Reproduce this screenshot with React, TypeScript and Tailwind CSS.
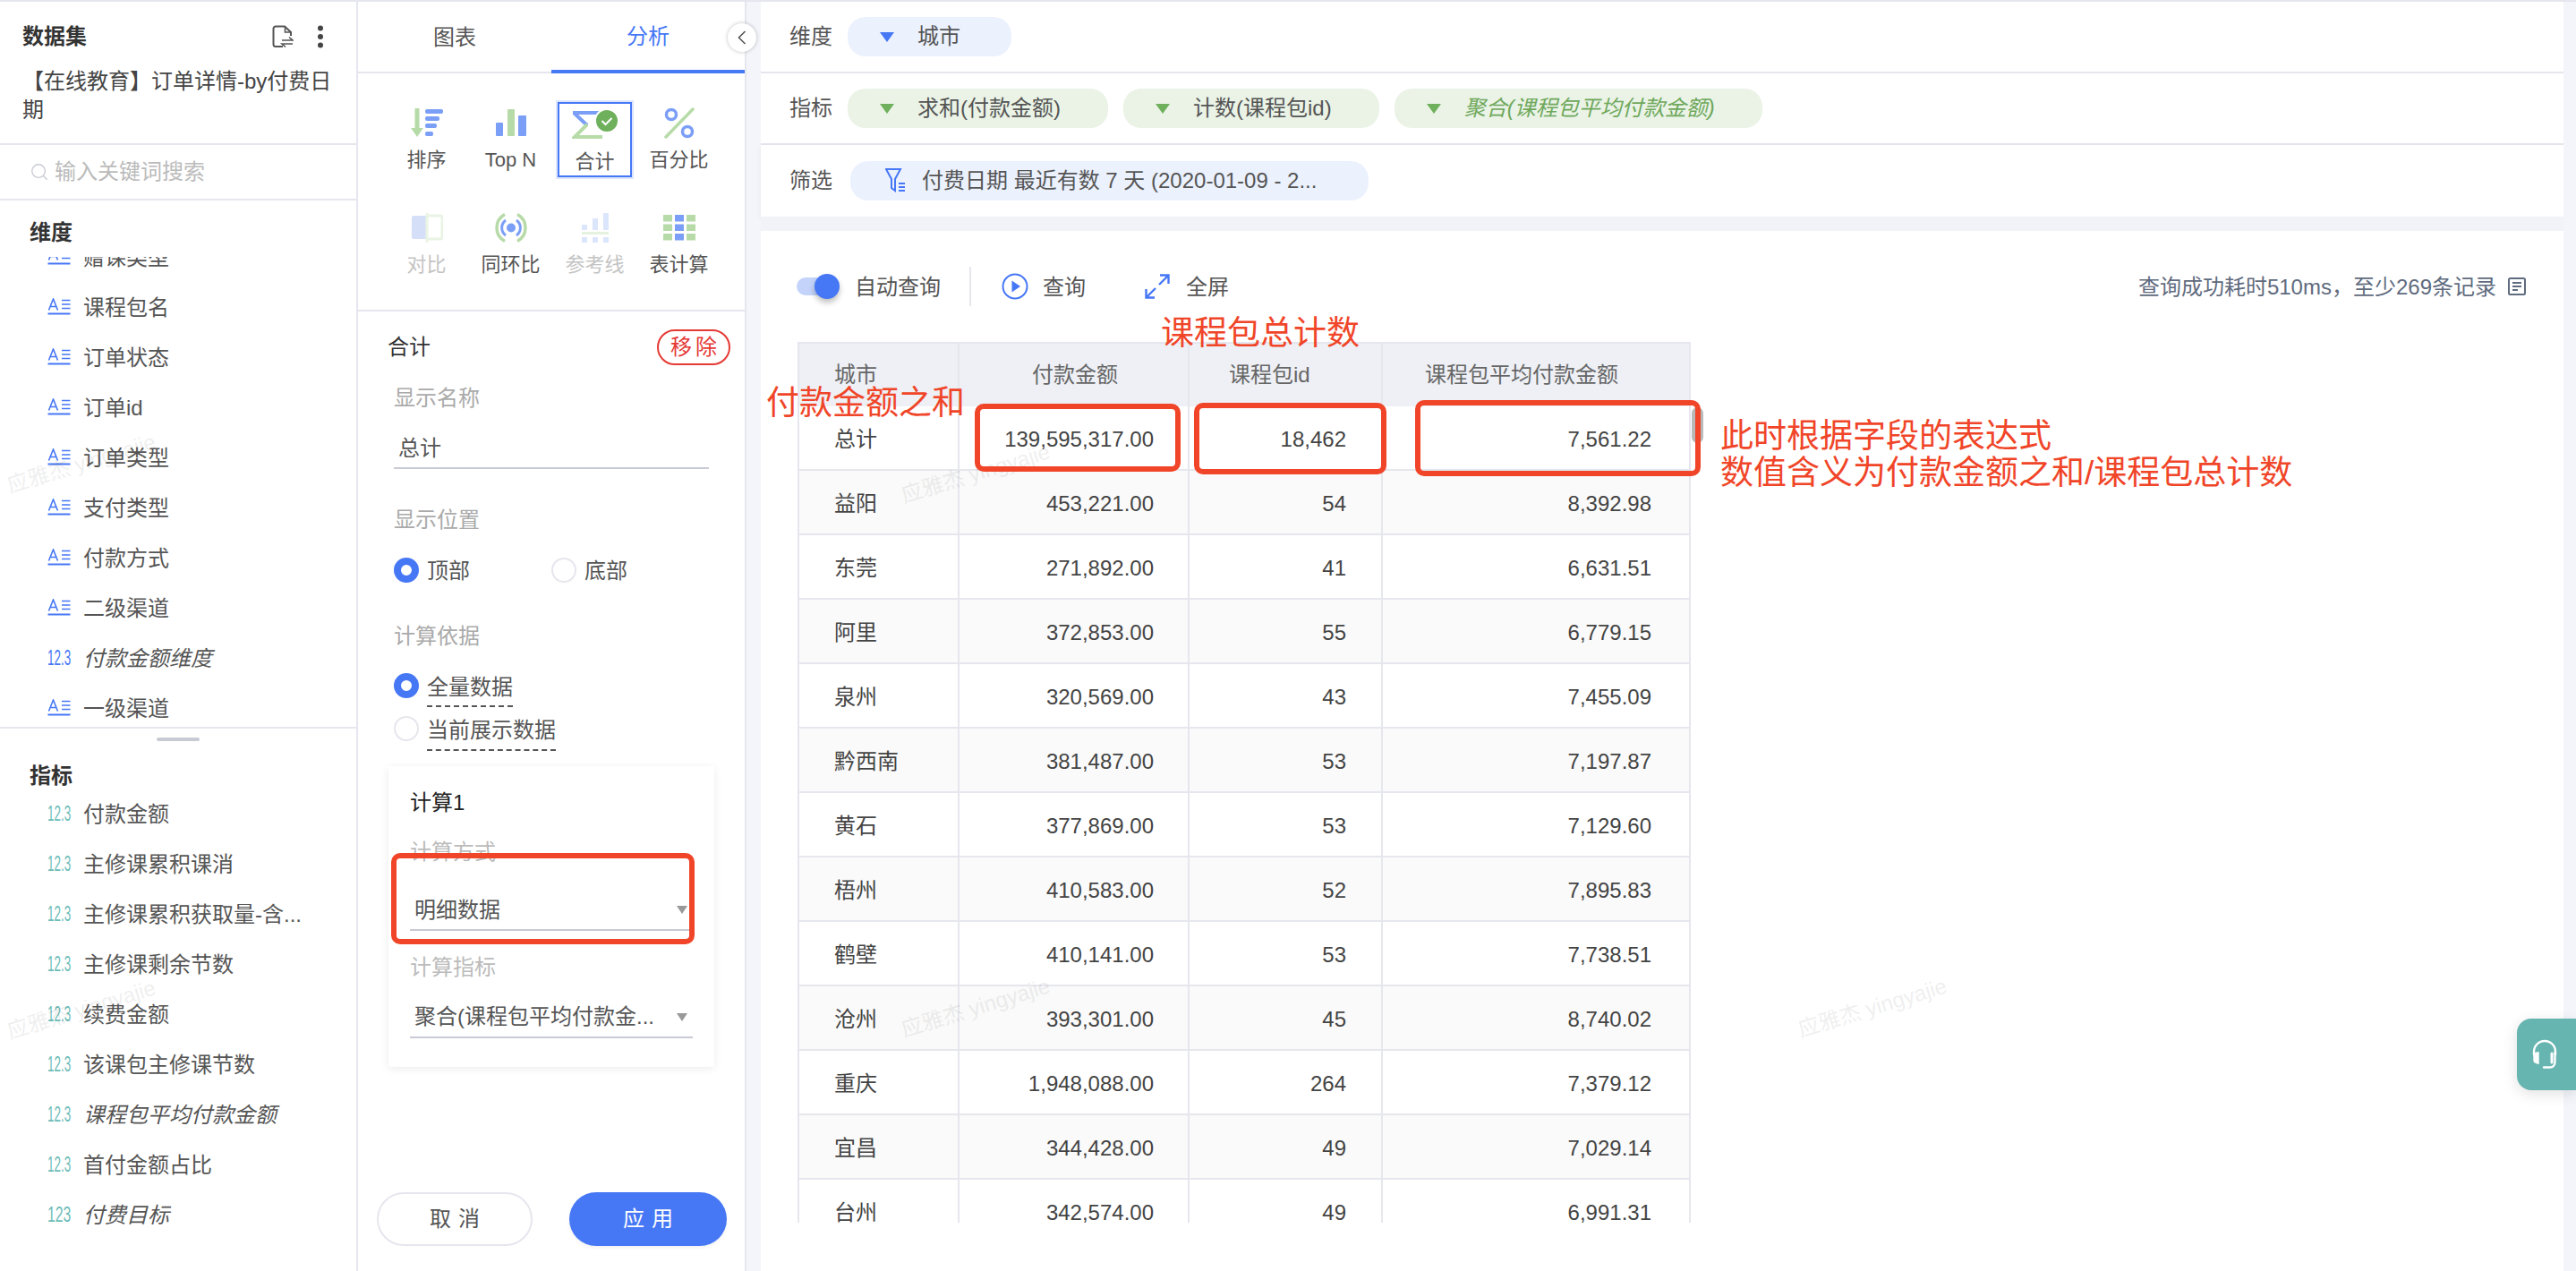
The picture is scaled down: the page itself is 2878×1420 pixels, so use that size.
import React from "react";
import { Search } from "lucide-react";

const dimensions = [
  { name: "赠课类型" },
  { name: "课程包名" },
  { name: "订单状态" },
  { name: "订单id" },
  { name: "订单类型" },
  { name: "支付类型" },
  { name: "付款方式" },
  { name: "二级渠道" },
  { name: "付款金额维度", num: true },
  { name: "一级渠道" },
];

const metrics = [
  { name: "付款金额" },
  { name: "主修课累积课消" },
  { name: "主修课累积获取量-含..." },
  { name: "主修课剩余节数" },
  { name: "续费金额" },
  { name: "该课包主修课节数" },
  { name: "课程包平均付款金额", calc: true },
  { name: "首付金额占比" },
  { name: "付费目标", calc: true, noDot: true },
];

const rows = [
  ["益阳", "453,221.00", "54", "8,392.98"],
  ["东莞", "271,892.00", "41", "6,631.51"],
  ["阿里", "372,853.00", "55", "6,779.15"],
  ["泉州", "320,569.00", "43", "7,455.09"],
  ["黔西南", "381,487.00", "53", "7,197.87"],
  ["黄石", "377,869.00", "53", "7,129.60"],
  ["梧州", "410,583.00", "52", "7,895.83"],
  ["鹤壁", "410,141.00", "53", "7,738.51"],
  ["沧州", "393,301.00", "45", "8,740.02"],
  ["重庆", "1,948,088.00", "264", "7,379.12"],
  ["宜昌", "344,428.00", "49", "7,029.14"],
  ["台州", "342,574.00", "49", "6,991.31"],
];

const BLUE = "#4677f5";
const BAR = "#7b9ff6";
const GREEN = "#b7dba8";

const TextIcon = () => (
  <svg width="26" height="20" viewBox="0 0 26 20" className="shrink-0" fill="none" stroke={BLUE}>
    <path d="M1.5 13.5 6.5 1 11.5 13.5M3.2 9.5H9.8" strokeWidth="1.6" />
    <path d="M16 2.5H25.5M16 7H25.5M16 11.5H25.5" strokeWidth="1.5" />
    <path d="M0.5 17.5H25.5" strokeWidth="2" />
  </svg>
);

const NumIcon = ({ color, noDot }: { color: string; noDot?: boolean }) => (
  <span className={`inline-block w-[26px] shrink-0 origin-left text-[24px] leading-[28px] ${noDot ? "scale-x-[0.66]" : "scale-x-[0.56]"}`} style={{ color }}>
    {noDot ? "123" : "12.3"}
  </span>
);

const Tri = ({ color, w = 16, h = 11 }: { color: string; w?: number; h?: number }) => (
  <svg width={w} height={h} viewBox="0 0 16 11" preserveAspectRatio="none" className="shrink-0">
    <path d="M0 0H16L8 11Z" fill={color} />
  </svg>
);

const SortIcon = () => (
  <svg width="36" height="33" viewBox="0 0 36 33">
    <path d="M4.5 0H9.5V22H14L7 32 0 22H4.5Z" fill={GREEN} />
    <rect x="16" y="1" width="20" height="5" rx="2" fill={BAR} />
    <rect x="16" y="9" width="16" height="5" rx="2" fill={BAR} />
    <rect x="16" y="17" width="13" height="5" rx="2" fill={BAR} />
    <rect x="16" y="26" width="9" height="5" rx="2" fill={BAR} />
  </svg>
);

const TopNIcon = () => (
  <svg width="34" height="33" viewBox="0 0 34 33">
    <rect x="0" y="16" width="8" height="15" rx="1" fill={BAR} />
    <rect x="13" y="1" width="8" height="30" rx="1" fill={GREEN} />
    <rect x="25" y="8" width="9" height="23" rx="1" fill={BAR} />
  </svg>
);

const SumIcon = () => (
  <svg width="52" height="33" viewBox="0 0 52 33" fill="none">
    <path d="M1 3H30M2 3 17 17" stroke={BAR} strokeWidth="4" />
    <path d="M17 16 3 30H34" stroke={GREEN} strokeWidth="4" />
    <circle cx="39" cy="12" r="13" fill="#6fb05c" stroke="#fff" strokeWidth="2" />
    <path d="M33.5 12 37.5 16 44.5 9" stroke="#fff" strokeWidth="2" />
  </svg>
);

const PercentIcon = () => (
  <svg width="34" height="35" viewBox="0 0 34 35" fill="none">
    <path d="M32 2 2 33" stroke={GREEN} strokeWidth="3.5" strokeLinecap="round" />
    <circle cx="8" cy="8" r="5.5" stroke={BAR} strokeWidth="3.5" />
    <circle cx="26" cy="27" r="5.5" stroke={BAR} strokeWidth="3.5" />
  </svg>
);

const CompareIcon = () => (
  <svg width="36" height="33" viewBox="0 0 36 33" fill="none">
    <path d="M3 3H17V29H3A2 2 0 0 1 1 27V5A2 2 0 0 1 3 3Z" fill="#d5dff7" />
    <path d="M18 0V33M18 3H33A2 2 0 0 1 35 5V27A2 2 0 0 1 33 29H18" stroke="#e9f4e4" strokeWidth="3" />
  </svg>
);

const RingIcon = () => (
  <svg width="36" height="35" viewBox="0 0 36 35" fill="none">
    <path d="M11 2.5A17 17 0 0 0 11 32.5M25 2.5A17 17 0 0 1 25 32.5" stroke={GREEN} strokeWidth="3.5" />
    <path d="M12 9A10.5 10.5 0 0 0 12 26M24 9A10.5 10.5 0 0 1 24 26" stroke={BAR} strokeWidth="3" />
    <circle cx="18" cy="17.5" r="5" fill={BAR} />
  </svg>
);

const RefLineIcon = () => (
  <svg width="30" height="33" viewBox="0 0 30 33">
    <rect x="0" y="13" width="6" height="6" fill="#dbe5fb" />
    <rect x="12" y="6" width="6" height="13" fill="#dbe5fb" />
    <rect x="24" y="0" width="6" height="19" fill="#dbe5fb" />
    <rect x="0" y="21" width="30" height="3" fill="#e6f2e0" />
    <rect x="0" y="27" width="6" height="6" fill="#dbe5fb" />
    <rect x="12" y="27" width="6" height="6" fill="#dbe5fb" />
    <rect x="24" y="27" width="6" height="6" fill="#dbe5fb" />
  </svg>
);

const TableCalcIcon = () => (
  <svg width="36" height="29" viewBox="0 0 36 29">
    {[0, 10.5, 21].map((y) => (
      <g key={y}>
        <rect x="0" y={y} width="10" height="7.5" fill={GREEN} />
        <rect x="13" y={y} width="10" height="7.5" fill={BAR} />
        <rect x="26" y={y} width="10" height="7.5" fill={GREEN} />
      </g>
    ))}
  </svg>
);

const tools = [
  { label: "排序", icon: <SortIcon /> },
  { label: "Top N", icon: <TopNIcon /> },
  { label: "合计", icon: <SumIcon />, active: true },
  { label: "百分比", icon: <PercentIcon /> },
  { label: "对比", icon: <CompareIcon />, disabled: true },
  { label: "同环比", icon: <RingIcon /> },
  { label: "参考线", icon: <RefLineIcon />, disabled: true },
  { label: "表计算", icon: <TableCalcIcon /> },
];

const Radio = ({ checked }: { checked?: boolean }) =>
  checked ? (
    <span className="block h-[28px] w-[28px] shrink-0 rounded-full border-[8px] border-[#4677f5] bg-white" />
  ) : (
    <span className="block h-[28px] w-[28px] shrink-0 rounded-full border-2 border-[#e6e6ee] bg-white" />
  );

const Pill = ({ label, color, bg, triangle, italic, pr = "pr-[53px]" }: { label: string; color?: string; bg: string; triangle: string; italic?: boolean; pr?: string }) => (
  <div className={`flex h-[44px] items-center rounded-[20px] pl-[36px] ${pr} ${bg}`}>
    <Tri color={triangle} />
    <span className={`ml-[26px] whitespace-nowrap ${italic ? "italic" : ""}`} style={{ color }}>
      {label}
    </span>
  </div>
);

const annotationBoxes = [
  "left-[437px] top-[953px] h-[102px] w-[339px]",
  "left-[1089px] top-[451px] h-[76px] w-[230px]",
  "left-[1334px] top-[450px] h-[80px] w-[215px]",
  "left-[1581px] top-[447px] h-[85px] w-[319px]",
];

const watermarks = [
  "left-[5px] top-[502px]",
  "left-[5px] top-[1112px]",
  "left-[1004px] top-[513px]",
  "left-[1004px] top-[1110px]",
  "left-[2006px] top-[1110px]",
];

export default function App() {
  return (
    <div className="relative h-[1420px] w-[2878px] overflow-hidden bg-white font-['Liberation_Sans','Noto_Sans_CJK_SC',sans-serif] text-[24px] leading-[32px] text-[#555]">
      <div className="h-[2px] bg-[#e6e6ee]" />
      <div className="flex h-[1418px]">
        {/* 数据集 */}
        <aside className="w-[400px] shrink-0 border-r-2 border-[#e6e6ee]">
          <div className="h-[160px] border-b-2 border-[#e6e6ee] pl-[25px] pr-[24px] pt-[23px]">
            <div className="flex items-center justify-between pr-[12px]">
              <span className="font-bold text-[#333]">数据集</span>
              <div className="flex items-center gap-[26px]">
                <svg width="24" height="26" viewBox="0 0 24 26" fill="none" stroke="#555" strokeWidth="2">
                  <path d="M12 24H4A2.5 2.5 0 0 1 1.5 21.5V4A2.5 2.5 0 0 1 4 1.5H14L21 8V12" />
                  <path d="M14.5 1.5V8H21" strokeWidth="1.6" />
                  <path d="M11 17H23L19 13.5M23 21H11L15 24.5" strokeWidth="1.6" />
                </svg>
                <svg width="8" height="26" viewBox="0 0 8 26" fill="#444">
                  <circle cx="4" cy="3.5" r="3" />
                  <circle cx="4" cy="13" r="3" />
                  <circle cx="4" cy="22.5" r="3" />
                </svg>
              </div>
            </div>
            <div className="mt-[18px] text-[#444]">【在线教育】订单详情-by付费日期</div>
          </div>
          <div className="flex h-[62px] items-center gap-[6px] border-b-2 border-[#e6e6ee] pl-[33px] text-[#bbb]">
            <Search size={22} strokeWidth={1.5} className="text-[#c8cad4]" />
            <span>输入关键词搜索</span>
          </div>
          <div className="h-[63px] pl-[33px] pt-[20px] font-bold text-[#333]">维度</div>
          <div className="h-[527px] overflow-hidden border-b-2 border-[#e6e6ee]">
            <div className="-mt-[28px]">
              {dimensions.map((d) => (
                <div key={d.name} className="flex h-[56px] items-center gap-[14px] pl-[53px]">
                  {d.num ? <NumIcon color={BLUE} /> : <TextIcon />}
                  <span className={`pt-[2px] ${d.num ? "italic" : ""}`}>{d.name}</span>
                </div>
              ))}
            </div>
          </div>
          <div className="mx-auto mt-[10px] h-[4px] w-[48px] rounded-full bg-[#c8cad4]" />
          <div className="mt-[21px] h-[32px] pl-[33px] pt-[2px] font-bold text-[#333]">指标</div>
          {metrics.map((m) => (
            <div key={m.name} className="flex h-[56px] items-center gap-[14px] pl-[53px]">
              <NumIcon color="#6cbcb8" noDot={m.noDot} />
              <span className={`whitespace-nowrap pt-[2px] ${m.calc ? "italic" : ""}`}>{m.name}</span>
            </div>
          ))}
        </aside>

        {/* 分析配置 */}
        <section className="flex w-[434px] shrink-0 flex-col border-r-2 border-[#e6e6ee]">
          <div className="flex h-[80px] border-b-2 border-[#e6e6ee]">
            <div className="flex w-[216px] items-center justify-center pt-[2px]">图表</div>
            <div className="-mb-[2px] flex w-[216px] items-center justify-center border-b-4 border-[#4677f5] pt-[2px] text-[#4677f5]">分析</div>
          </div>
          <div className="h-[266px] border-b-2 border-[#e6e6ee] pl-[35px] pt-[32px]">
            <div className="grid grid-cols-[repeat(4,83px)] gap-x-[11px] gap-y-[33px]">
              {tools.map((t) => (
                <div
                  key={t.label}
                  className={`flex h-[84px] flex-col items-center pt-[6px] text-[22px] leading-[28px] whitespace-nowrap ${
                    t.active ? "outline-2 outline-[#dbe5fd] border-2 border-[#4677f5] pt-[4px]" : ""
                  } ${t.disabled ? "text-[#c4c4c4]" : ""}`}
                >
                  <div className="flex h-[35px] items-center">{t.icon}</div>
                  <div className="mt-[10px]">{t.label}</div>
                </div>
              ))}
            </div>
          </div>
          <div className="mt-[20px] flex h-[40px] items-center justify-between pl-[33px] pr-[16px]">
            <span className="text-[#333]">合计</span>
            <span className="flex h-[40px] w-[82px] items-center justify-center rounded-full border-2 border-[#e53935] pl-[4px] tracking-[4px] text-[#e53935]">移除</span>
          </div>
          <div className="pl-[40px]">
            <div className="mt-[19px] pt-[2px] text-[#aaa]">显示名称</div>
            <div className="flex h-[63px] w-[352px] items-end border-b-2 border-[#c8cad4] pb-[5px] pl-[5px]">总计</div>
            <div className="mt-[39px] pt-[2px] text-[#aaa]">显示位置</div>
            <div className="mt-[23px] flex items-center">
              <div className="flex w-[176px] items-center gap-[9px]">
                <Radio checked />
                <span className="pt-[2px]">顶部</span>
              </div>
              <div className="flex items-center gap-[9px]">
                <Radio />
                <span className="pt-[2px]">底部</span>
              </div>
            </div>
            <div className="mt-[39px] pt-[2px] text-[#aaa]">计算依据</div>
            <div className="mt-[23px] flex items-start gap-[9px]">
              <div className="mt-[2px]"><Radio checked /></div>
              <span className="border-b-2 border-dashed border-[#555] pb-[4px] pt-[2px]">全量数据</span>
            </div>
            <div className="mt-[8px] flex items-start gap-[9px]">
              <div className="mt-[2px]"><Radio /></div>
              <span className="border-b-2 border-dashed border-[#555] pb-[5px] pt-[2px]">当前展示数据</span>
            </div>
            <div className="-ml-[6px] mt-[17px] h-[336px] w-[364px] rounded-[2px] bg-white pl-[24px] pt-[25px] shadow-[0_2px_10px_rgba(0,0,0,0.08)]">
              <div className="text-[#222]">计算1</div>
              <div className="mt-[23px] text-[#bbb]">计算方式</div>
              <div className="flex h-[72px] w-[316px] items-end justify-between border-b-2 border-[#c8cad4] pb-[5px] pl-[5px] pr-[6px]">
                <span>明细数据</span>
                <span className="mb-[12px]"><Tri color="#999" w={12} h={9} /></span>
              </div>
              <div className="mt-[25px] text-[#bbb]">计算指标</div>
              <div className="flex h-[63px] w-[316px] items-end justify-between border-b-2 border-[#c8cad4] pb-[6px] pl-[5px] pr-[6px]">
                <span className="whitespace-nowrap">聚合(课程包平均付款金...</span>
                <span className="mb-[11px]"><Tri color="#999" w={12} h={9} /></span>
              </div>
            </div>
          </div>
          <div className="mt-auto flex pb-[28px] pl-[21px]">
            <button className="h-[60px] w-[174px] rounded-full border-2 border-[#e6e6ee] bg-white pl-[8px] tracking-[8px] text-[#555]">取消</button>
            <button className="ml-[41px] h-[60px] w-[176px] rounded-full bg-[#4677f5] pl-[8px] tracking-[8px] text-white shadow-[0_2px_4px_rgba(0,0,0,0.06)]">应用</button>
          </div>
        </section>

        <div className="w-[16px] shrink-0 bg-[#f4f5fa]" />

        {/* 主内容 */}
        <main className="flex w-[2014px] shrink-0 flex-col">
          <div className="flex h-[80px] items-center border-b-2 border-[#e6e6ee] pl-[32px]">
            <span className="w-[48px]">维度</span>
            <div className="ml-[17px]">
              <Pill label="城市" bg="bg-[#ebf1fd]" triangle={BLUE} pr="pr-[57px]" />
            </div>
          </div>
          <div className="flex h-[80px] items-center border-b-2 border-[#e6e6ee] pl-[32px]">
            <span className="w-[48px]">指标</span>
            <div className="ml-[17px] flex gap-[17px]">
              <Pill label="求和(付款金额)" bg="bg-[#eaf3e6]" triangle="#6fb05c" />
              <Pill label="计数(课程包id)" bg="bg-[#eaf3e6]" triangle="#6fb05c" />
              <Pill label="聚合(课程包平均付款金额)" bg="bg-[#eaf3e6]" triangle="#6fb05c" color="#6fa85c" italic />
            </div>
          </div>
          <div className="flex h-[80px] items-center pl-[32px] shadow-[0_2px_6px_rgba(0,0,0,0.06)]">
            <span className="w-[48px]">筛选</span>
            <div className="ml-[20px] flex h-[44px] w-[579px] items-center gap-[18px] rounded-[20px] bg-[#ebf1fd] pl-[39px]">
              <svg width="23" height="30" viewBox="0 0 23 30" fill="none" stroke={BLUE} strokeWidth="2" className="shrink-0">
                <path d="M1 2H17L11 13V26L7 23V13Z" />
                <path d="M15 18H22M15 22H22M15 26H22" />
              </svg>
              <span className="whitespace-nowrap">付费日期 最近有数 7 天 (2020-01-09 - 2...</span>
            </div>
          </div>
          <div className="h-[16px] shrink-0 bg-[#f2f3f8]" />

          <div className="flex items-center pl-[40px] pr-[42px] pt-[40px]">
            <div className="relative h-[44px] w-[48px]">
              <div className="absolute left-0 top-[12px] h-[20px] w-[40px] rounded-full bg-[#c3d3fa]" />
              <div className="absolute left-[20px] top-[8px] h-[28px] w-[28px] rounded-full bg-[#4677f5] shadow-[0_4px_6px_rgba(0,0,0,0.25)]" />
            </div>
            <span className="ml-[17px] pt-[2px]">自动查询</span>
            <div className="ml-[32px] h-[44px] w-[2px] bg-[#e6e6ee]" />
            <svg width="30" height="30" viewBox="0 0 30 30" fill="none" className="ml-[34px]">
              <circle cx="15" cy="15" r="13.5" stroke={BLUE} strokeWidth="2" />
              <path d="M11.5 8.5 21 15 11.5 21.5Z" fill={BLUE} />
            </svg>
            <span className="ml-[16px] pt-[2px]">查询</span>
            <svg width="28" height="28" viewBox="0 0 28 28" fill="none" stroke={BLUE} strokeWidth="2.4" className="ml-[66px]">
              <path d="M17 1.5H26.5V11M26.5 1.5 16 12" />
              <path d="M1.5 17V26.5H11M1.5 26.5 12 16" />
            </svg>
            <span className="ml-[18px] pt-[2px]">全屏</span>
            <span className="ml-auto pt-[2px] text-[#5f6b7e]">查询成功耗时510ms，至少269条记录</span>
            <svg width="20" height="20" viewBox="0 0 20 20" fill="none" stroke="#5f6b7e" strokeWidth="2" className="ml-[13px]">
              <rect x="1" y="1" width="18" height="18" rx="1.5" />
              <path d="M5 6H15M5 10H15M5 14H11" />
            </svg>
          </div>

          <div className="ml-[41px] mt-[40px] h-[984px] w-[998px] overflow-hidden border-l-2 border-[#e6e6ee]">
            <div className="grid h-[72px] grid-cols-[179px_257px_216px_344px] border-t-2 border-[#e6e6ee] bg-[#eef0f5] text-[#666]">
              <div className="flex items-center border-r-2 border-[#e6e6ee] pl-[39px]">城市</div>
              <div className="flex items-center border-r-2 border-[#e6e6ee] pl-[81px]">付款金额</div>
              <div className="flex items-center border-r-2 border-[#e6e6ee] pl-[44px]">课程包id</div>
              <div className="flex items-center border-r-2 border-[#e6e6ee] pl-[47px]">课程包平均付款金额</div>
            </div>
            {[["总计", "139,595,317.00", "18,462", "7,561.22"], ...rows].map((r, i) => (
              <div key={r[0]} className={`grid h-[72px] grid-cols-[179px_257px_216px_344px] border-b-2 border-[#e6e6ee] text-[#444] ${i % 2 === 1 ? "bg-[#fafafa]" : "bg-white"}`}>
                <div className="flex items-center border-r-2 border-[#e6e6ee] pl-[39px] pt-[3px]">{r[0]}</div>
                <div className="flex items-center justify-end border-r-2 border-[#e6e6ee] pr-[38px] pt-[3px]">{r[1]}</div>
                <div className="flex items-center justify-end border-r-2 border-[#e6e6ee] pr-[39px] pt-[3px]">{r[2]}</div>
                <div className="flex items-center justify-end border-r-2 border-[#e6e6ee] pr-[42px] pt-[3px]">{r[3]}</div>
              </div>
            ))}
          </div>
        </main>

        <div className="flex-1 bg-[#f4f5fa]" />
      </div>

      {/* 收起按钮 */}
      <div className="absolute left-[813px] top-[26px] flex h-[32px] w-[32px] items-center justify-center rounded-full bg-white shadow-[0_0_4px_rgba(0,0,0,0.25)]">
        <svg width="10" height="16" viewBox="0 0 10 16" fill="none" stroke="#555" strokeWidth="1.6">
          <path d="M8.5 1 1.5 8 8.5 15" />
        </svg>
      </div>

      {/* 表格滚动条 */}
      <div className="absolute left-[1890px] top-[455px] h-[40px] w-[13px] rounded-full bg-[#b9b9b9]" />

      {/* 水印 */}
      {watermarks.map((w) => (
        <div key={w} className={`pointer-events-none absolute ${w} -rotate-[17deg] whitespace-nowrap text-[#000] opacity-[0.06]`}>
          应雅杰 yingyajie
        </div>
      ))}

      {/* 截图上的红色标注 */}
      {annotationBoxes.map((b) => (
        <div key={b} className={`pointer-events-none absolute ${b} rounded-[10px] border-[6px] border-[#f04528]`} />
      ))}
      <div className="absolute left-[856px] top-[427px] whitespace-nowrap text-[37px] leading-[48px] text-[#f04528]">付款金额之和</div>
      <div className="absolute left-[1297px] top-[349px] whitespace-nowrap text-[37px] leading-[48px] text-[#f04528]">课程包总计数</div>
      <div className="absolute left-[1922px] top-[467px] whitespace-nowrap text-[37px] leading-[41px] text-[#f04528]">
        此时根据字段的表达式
        <br />
        数值含义为付款金额之和/课程包总计数
      </div>

      {/* 客服入口 */}
      <div className="absolute left-[2812px] top-[1138px] flex h-[80px] w-[66px] items-center justify-center rounded-l-[16px] bg-[#66b5b0] pr-[4px] shadow-[0_4px_16px_rgba(0,0,0,0.12)]">
        <svg width="28" height="34" viewBox="0 0 28 34" fill="none" stroke="#fff" strokeWidth="2.4" strokeLinecap="round">
          <path d="M2 17V14A12 12 0 0 1 26 14V17" />
          <path d="M2.5 15V24C2.5 25 4 26 6.5 26.5V15.5C4 16 2.5 16 2.5 15Z" fill="#fff" />
          <path d="M25.5 15V25.5C25.5 29 23 31.5 20 31.5H13" />
          <path d="M22 16V26" strokeWidth="3" />
        </svg>
      </div>
    </div>
  );
}
